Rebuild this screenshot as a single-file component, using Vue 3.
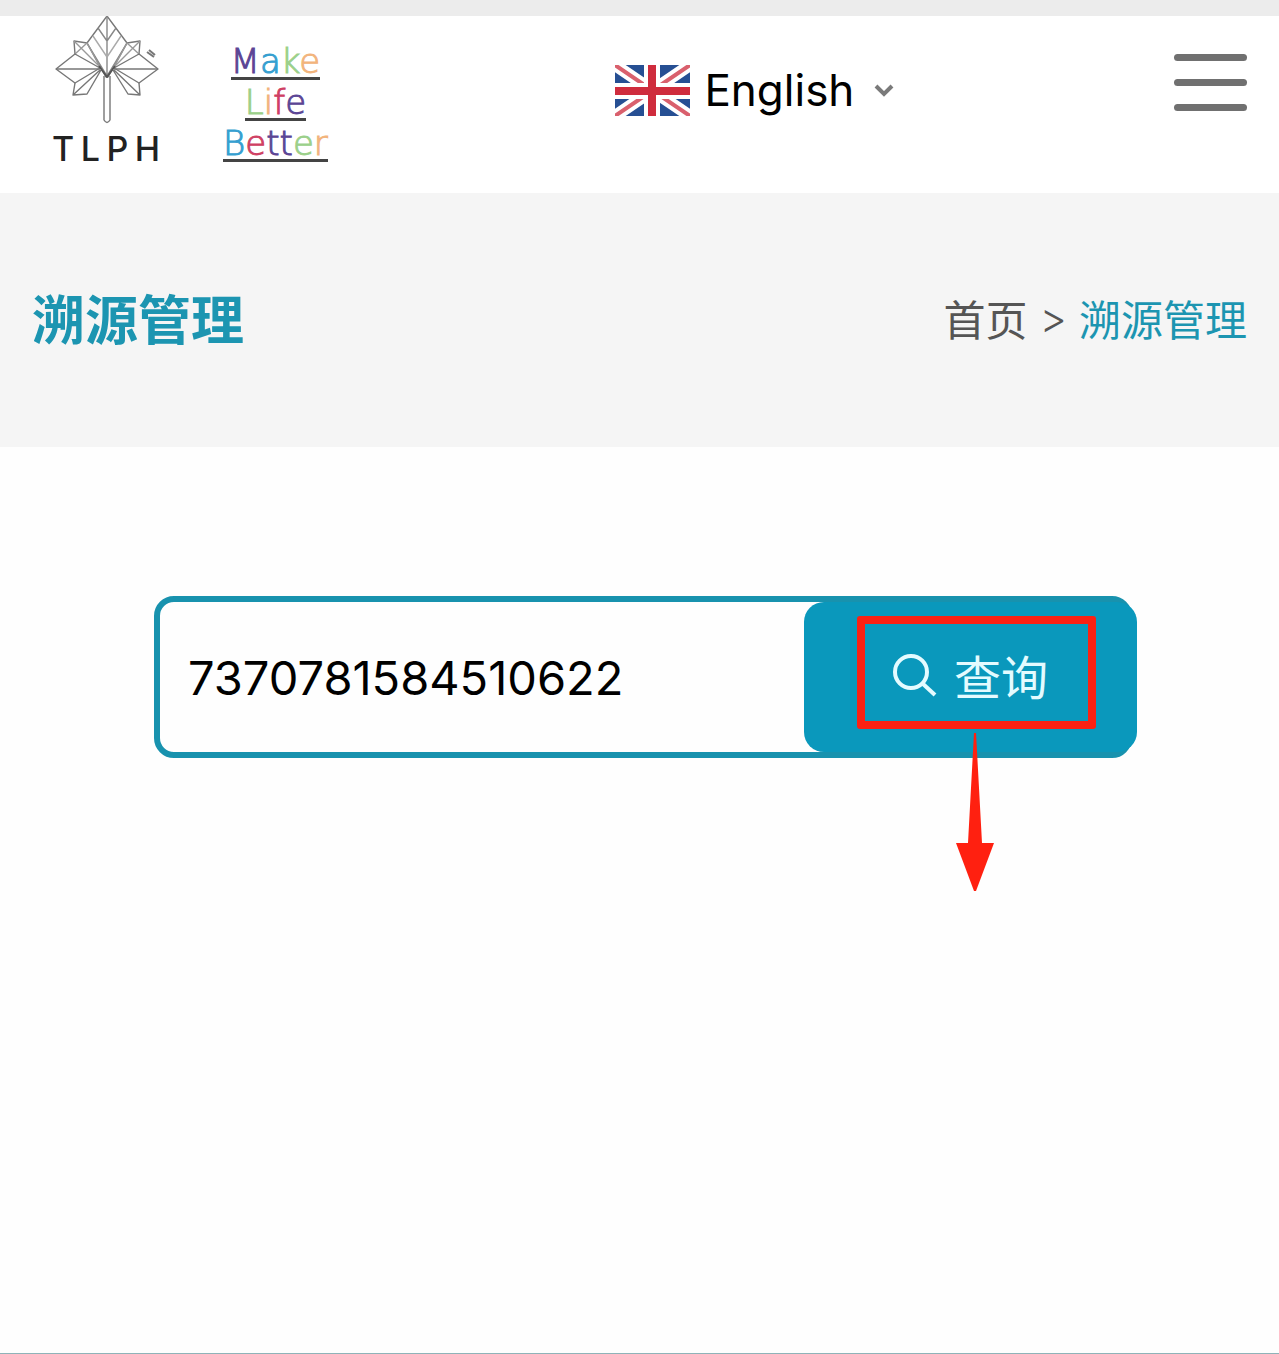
<script setup>
import { ref } from 'vue';

const language = ref('en');
const code = ref('7370781584510622');
const menuOpen = ref(false);

const brandLetters = ['T', 'L', 'P', 'H'];

const purple = '#5b4595';
const blue = '#369fd0';
const green = '#9bd08a';
const orange = '#f2b47c';
const red = '#cf3f63';

const slogan = [
  { word: 'Make', colors: [purple, blue, green, orange] },
  { word: 'Life', colors: [green, orange, red, purple] },
  { word: 'Better', colors: [blue, red, purple, purple, green, orange] },
];

const search = () => {
  code.value = code.value.trim();
};
</script>

<template>
  <div class="page">
    <div class="top-strip"></div>

    <header class="header">
      <div class="brand">
        <div class="logo">
          <svg class="leaf" viewBox="0 0 108 108" fill="none" stroke="#777" stroke-width="1.4" stroke-linejoin="round">
            <path d="M55 0 35 27 54 61 56 61 75 27Z" />
            <path d="M55 0V60M46 12 55 25 64 12M35 27 55 60 75 27" stroke="#888" />
            <path d="M41 20 55 41 69 20" stroke="#aaa" />
            <path d="M35 27 22 25 23 38M75 27 88 25 87 38" />
            <path d="M23 38 35 27 48 51M87 38 75 27 62 51M22 25 48 51M88 25 62 51" stroke="#999" />
            <path d="M48 52 23 38 4 53 23 67ZM62 52 87 38 106 53 87 67Z" />
            <path d="M4 53H48M106 53H62" />
            <path d="M23 67 21 79 35 78 49 54M87 67 88 79 76 78 61 54M21 79 48 54M88 79 62 54" />
            <path d="M47 50 55 61 63 50" stroke="#555" stroke-width="2" />
            <path d="M52 60V104Q55 109 58 104V60" />
            <path d="M95 36 102 41M97 34 103 39" stroke-width="2" />
          </svg>
          <div class="logo-name">
            <span v-for="letter in brandLetters" :key="letter">{{ letter }}</span>
          </div>
        </div>
        <div class="slogan">
          <div v-for="line in slogan" :key="line.word" class="slogan-word">
            <span v-for="(color, i) in line.colors" :key="i" :style="{ color }">{{ line.word[i] }}</span>
          </div>
        </div>
      </div>

      <label class="language">
        <svg class="flag" viewBox="0 0 75 51">
          <rect width="75" height="51" fill="#264f93" />
          <path d="M0 0 75 51M75 0 0 51" stroke="#fff" stroke-width="12" />
          <path d="M0 0 75 51M75 0 0 51" stroke="#d9606d" stroke-width="4" />
          <path d="M37 0V51M0 26H75" stroke="#fff" stroke-width="16" />
          <path d="M37 0V51M0 26H75" stroke="#cf2c3d" stroke-width="8" />
        </svg>
        <select v-model="language" aria-label="Language">
          <option value="en">English</option>
          <option value="zh">中文</option>
        </select>
        <svg class="chevron" viewBox="0 0 20 14" fill="none" stroke="#7a7a7a" stroke-width="4">
          <path d="M2 3 10 11 18 3" />
        </svg>
      </label>

      <button class="menu-btn" aria-label="Menu" :aria-expanded="menuOpen" @click="menuOpen = !menuOpen">
        <span></span>
        <span></span>
        <span></span>
      </button>
    </header>

    <section class="banner">
      <h1>溯源管理</h1>
      <nav class="breadcrumb">
        <a href="#">首页</a>
        <span class="separator">&gt;</span>
        <a href="#" class="current">溯源管理</a>
      </nav>
    </section>

    <main class="content">
      <form class="search-box" @submit.prevent="search">
        <input v-model="code" type="text" aria-label="溯源码">
        <button type="submit" class="search-btn">
          <svg class="search-icon" viewBox="0 0 44 44" fill="none" stroke="#e4fbff" stroke-width="4">
            <circle cx="18" cy="20" r="16" />
            <path d="M29 31 42 43" />
          </svg>
          <span>查询</span>
        </button>
        <div class="highlight"></div>
        <svg class="arrow" viewBox="0 0 38 158" fill="#ff2010">
          <path d="M18 0H20L26 110H38L20 158H18L0 110H12Z" />
        </svg>
      </form>
    </main>

    <footer class="footer"></footer>
  </div>
</template>

<style>
body {
  margin: 0;
}
</style>

<style scoped>
.page {
  display: flex;
  flex-direction: column;
  min-height: 100vh;
  background: #fefefe;
  font-family: Inter, "Noto Sans CJK SC", sans-serif;
}

button,
input,
select {
  font-family: inherit;
}

.top-strip {
  height: 16px;
  background: #ececec;
}

/* 顶部 */
.header {
  display: flex;
  justify-content: space-between;
  align-items: flex-start;
  height: 177px;
  padding: 0 32px 0 52px;
  box-sizing: border-box;
  background: #fff;
}

.brand {
  display: flex;
  gap: 63px;
}

.logo {
  width: 108px;
}

.leaf {
  display: block;
  width: 108px;
  height: 108px;
}

.logo-name {
  display: flex;
  justify-content: space-between;
  margin-top: 5px;
  font-size: 34px;
  font-weight: 500;
  line-height: 40px;
  color: #222;
}

.slogan {
  display: flex;
  flex-direction: column;
  align-items: center;
  gap: 6px;
  padding-top: 29px;
}

.slogan-word {
  border-bottom: 3px solid #444;
  font-family: "DejaVu Sans", sans-serif;
  font-size: 34px;
  font-weight: 200;
  line-height: 32px;
  -webkit-text-stroke: 1px;
}

.language {
  display: flex;
  align-items: center;
  padding: 46px 0 0 8px;
}

.flag {
  width: 75px;
  height: 51px;
  margin-right: 14px;
}

.language select {
  width: 170px;
  height: 56px;
  padding: 0;
  border: none;
  background: transparent;
  color: #000;
  font-size: 44px;
  line-height: 56px;
  appearance: none;
  cursor: pointer;
}

.chevron {
  width: 20px;
  height: 14px;
}

.menu-btn {
  display: flex;
  flex-direction: column;
  gap: 18px;
  width: 73px;
  margin-top: 38px;
  padding: 0;
  border: none;
  background: none;
  cursor: pointer;
}

.menu-btn span {
  width: 100%;
  height: 7px;
  border-radius: 4px;
  background: #707070;
}

/* 标题栏 */
.banner {
  display: flex;
  justify-content: space-between;
  align-items: center;
  height: 254px;
  padding: 0 32px 6px;
  box-sizing: border-box;
  background: #f5f5f5;
}

.banner h1 {
  margin: 0;
  color: #1c95b1;
  font-size: 53px;
  font-weight: bold;
}

.breadcrumb {
  display: flex;
  align-items: center;
  gap: 12px;
  color: #555;
  font-size: 42px;
}

.breadcrumb a {
  color: inherit;
  text-decoration: none;
}

.breadcrumb .separator {
  font-weight: 300;
}

.breadcrumb .current {
  color: #1c95b1;
}

/* 查询 */
.content {
  flex: 1;
  padding: 149px 147px 0 154px;
}

.search-box {
  position: relative;
  display: flex;
  height: 150px;
  border: 6px solid #1892ae;
  border-radius: 20px;
}

.search-box input {
  flex: 1;
  min-width: 0;
  padding: 0 28px;
  border: none;
  outline: none;
  background: transparent;
  color: #000;
  font-size: 47px;
}

.search-btn {
  display: flex;
  align-items: center;
  justify-content: center;
  gap: 17px;
  width: 333px;
  margin-right: -11px;
  padding: 0 0 6px;
  border: none;
  border-radius: 20px;
  background: #0a98bc;
  color: #e4fbff;
  font-size: 47px;
  cursor: pointer;
}

.search-icon {
  width: 44px;
  height: 44px;
  overflow: visible;
}

/* 操作提示 */
.highlight {
  position: absolute;
  top: 14px;
  right: 30px;
  width: 239px;
  height: 113px;
  border: 8px solid #fb2113;
  border-radius: 3px;
  box-sizing: border-box;
  pointer-events: none;
}

.arrow {
  position: absolute;
  top: 131px;
  right: 132px;
  width: 38px;
  height: 158px;
  pointer-events: none;
}

.footer {
  border-top: 1px solid #8fb3b8;
}
</style>
